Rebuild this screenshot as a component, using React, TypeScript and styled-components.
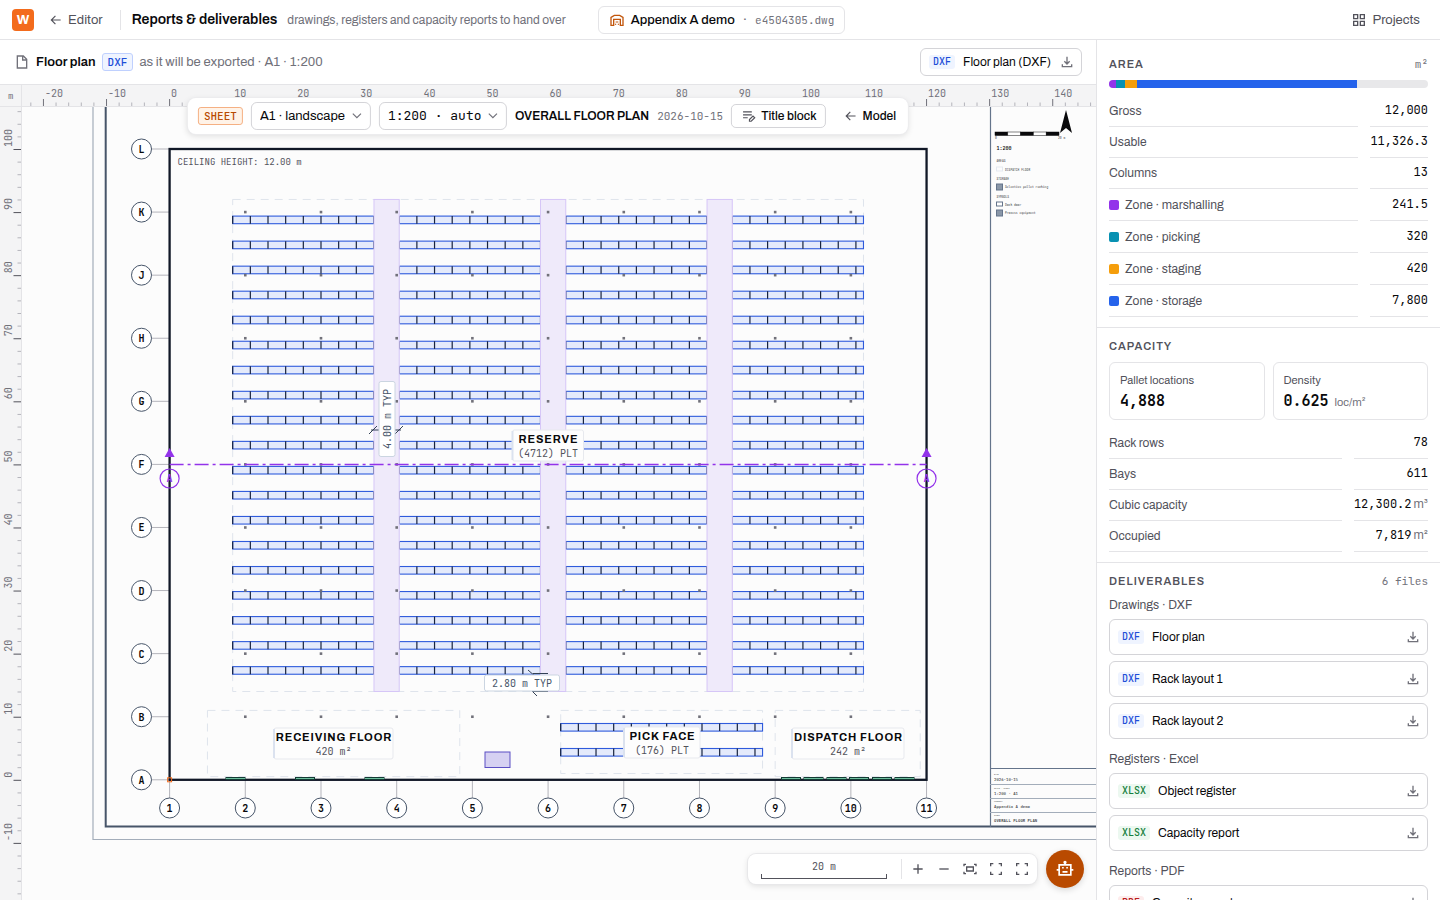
import React from "react";
import styled, { createGlobalStyle } from "styled-components";

const SANS = '"Archivo", "Liberation Sans", Arial, sans-serif';
const MONO = '"JetBrains Mono", "Liberation Mono", monospace';

const GlobalStyle = createGlobalStyle`
  *, *::before, *::after { box-sizing: border-box; }
  html, body, #root { height: 100%; margin: 0; }
  body { font-family: ${SANS}; font-size: 13px; line-height: 20px; color: #09090b; background: #fff; }
  button, select { font: inherit; color: inherit; }
  button { cursor: pointer; }
  h1, h2, h3, ul { margin: 0; padding: 0; }
`;

const BORDER = "#e4e4e7";

/* ---------- icons ---------- */

type IconProps = { size?: number; color?: string; children?: React.ReactNode };

const Stroke = ({ size = 16, color = "#52525b", children }: IconProps) => (
  <svg width={size} height={size} viewBox="0 0 24 24" fill="none" stroke={color} strokeWidth={2} aria-hidden="true">
    {children}
  </svg>
);

const ArrowLeftIcon = () => (
  <Stroke size={14}><path d="M20 12H5M11 5l-7 7 7 7" /></Stroke>
);
const FileIcon = () => (
  <Stroke color="#71717a"><path d="M14 3H5v18h14V8zM13 3v6h6" /></Stroke>
);
const DownloadIcon = () => (
  <Stroke color="#71717a"><path d="M12 4v11M8 11l4 4 4-4M5 15.500V19h14v-3.500" /></Stroke>
);
const WarehouseIcon = () => (
  <Stroke color="#c2560c">
    <path d="M3 20V8l5-3h8l5 3v12h-4v-9H7v9z" />
    <path d="M10 15h4M10 19.500v-2M14 19.500v-2" strokeWidth={1.5} />
  </Stroke>
);
const GridIcon = () => (
  <Stroke><path d="M4 4h6v6H4zM14 4h6v6h-6zM4 14h6v6H4zM14 14h6v6h-6z" /></Stroke>
);
const EditNoteIcon = () => (
  <Stroke size={14}><path d="M2 5h15M2 10h15M2 15h8M13 21v-3l6-6 3 3-6 6z" /></Stroke>
);
const ChevronIcon = () => (
  <Stroke size={14} color="#71717a"><path d="M5 8l7 7 7-7" /></Stroke>
);
const PlusIcon = () => <Stroke><path d="M12 5v14M5 12h14" /></Stroke>;
const MinusIcon = () => <Stroke><path d="M5 12h14" /></Stroke>;
const FitIcon = () => (
  <Stroke><path d="M3 8V5h3M18 5h3v3M21 16v3h-3M6 19H3v-3M7 9h10v6H7z" /></Stroke>
);
const FrameIcon = () => (
  <Stroke><path d="M4 8V4h4M16 4h4v4M20 16v4h-4M8 20H4v-4" /></Stroke>
);
const RobotIcon = () => (
  <Stroke size={20} color="#fff">
    <path d="M5 7h14v12H5zM12 7V4M2 13h3M19 13h3M9 15.500h6" />
    <circle cx="12" cy="4" r="1" />
    <path d="M8.500 10.500h2M13.500 10.500h2" />
  </Stroke>
);

/* ---------- shell ---------- */

const Page = styled.div`
  display: flex;
  flex-direction: column;
  height: 100vh;
  overflow: hidden;
`;

const TopBar = styled.header`
  display: flex;
  align-items: center;
  flex: none;
  height: 40px;
  padding: 0 12px;
  border-bottom: 1px solid ${BORDER};
`;

const Logo = styled.span`
  display: grid;
  place-items: center;
  width: 22px;
  height: 22px;
  border-radius: 4px;
  background: #f36b1c;
  color: #fff;
  font-size: 13px;
  font-weight: 700;
`;

const NavLink = styled.a<{ $push?: boolean }>`
  display: flex;
  align-items: center;
  gap: 5px;
  padding: 0 8px;
  margin-left: ${(p) => (p.$push ? "auto" : "7px")};
  color: #52525b;
  font-size: 13px;
  text-decoration: none;
`;

const Divider = styled.span`
  width: 1px;
  height: 20px;
  margin: 0 11px 0 9px;
  background: ${BORDER};
`;

const PageTitle = styled.h1`
  margin-right: 10px;
  font-size: 14px;
  font-weight: 600;
  white-space: nowrap;
`;

const Muted = styled.span<{ $small?: boolean }>`
  color: #71717a;
  font-size: ${(p) => (p.$small ? 12 : 13)}px;
  white-space: nowrap;
`;

const ProjectChip = styled.button`
  display: flex;
  align-items: center;
  gap: 6px;
  height: 28px;
  margin-left: 32px;
  padding: 0 10px;
  border: 1px solid ${BORDER};
  border-radius: 6px;
  background: #fff;
  font-size: 13px;
  font-weight: 500;
  white-space: nowrap;
`;

const Dot = styled.span`
  margin: 0 2px;
  color: #71717a;
`;

const Mono = styled.span`
  color: #71717a;
  font-family: ${MONO};
  font-size: 11px;
  font-weight: 400;
`;

const Body = styled.div`
  display: flex;
  flex: 1;
  min-height: 0;
`;

const Workspace = styled.main`
  display: flex;
  flex-direction: column;
  flex: 1;
  min-width: 0;
`;

const SubBar = styled.div`
  display: flex;
  align-items: center;
  flex: none;
  gap: 6px;
  height: 45px;
  padding: 0 14px;
  border-bottom: 1px solid ${BORDER};
`;

const SubTitle = styled.h2`
  font-size: 13px;
  font-weight: 600;
`;

const tones = {
  blue: ["#1d4ed8", "#eff4ff", "#bfd0fe"],
  green: ["#15803d", "#ecf8f0", "#bbf7d0"],
  orange: ["#b84a00", "#fff3e8", "#f5b083"],
  red: ["#b91c1c", "#fdecec", "#fecaca"],
};

const Badge = styled.span<{ $tone: keyof typeof tones; $outlined?: boolean }>`
  padding: 0 ${(p) => (p.$outlined ? 5 : 4)}px;
  border: ${(p) => (p.$outlined ? `1px solid ${tones[p.$tone][2]}` : "0")};
  border-radius: 3px;
  background: ${(p) => tones[p.$tone][1]};
  color: ${(p) => tones[p.$tone][0]};
  font-family: ${MONO};
  font-size: ${(p) => (p.$outlined ? 11 : 10)}px;
  font-weight: 500;
  line-height: ${(p) => (p.$outlined ? 16 : 14)}px;
`;

const ExportButton = styled.button`
  display: flex;
  align-items: center;
  gap: 8px;
  height: 28px;
  margin-left: auto;
  padding: 0 6px 0 8px;
  border: 1px solid #d4d4d8;
  border-radius: 6px;
  background: #fff;
  font-size: 12px;
`;

/* ---------- canvas ---------- */

const Canvas = styled.section`
  position: relative;
  flex: 1;
  min-height: 0;
  overflow: hidden;
  background: #fcfcfc;
`;

const Drawing = styled.svg`
  display: block;
  width: 100%;
  height: 100%;
  font-family: ${MONO};
`;

const SheetBar = styled.div`
  position: absolute;
  top: 13px;
  left: 50%;
  display: flex;
  align-items: center;
  gap: 8px;
  height: 36px;
  padding: 0 10px;
  border-radius: 8px;
  background: #fff;
  box-shadow: 0 0 0 1px #ececee, 0 2px 6px rgba(0, 0, 0, 0.12);
  transform: translateX(-50%);
  white-space: nowrap;
`;

const SelectWrap = styled.span<{ $mono?: boolean }>`
  display: grid;
  align-items: center;
  height: 28px;
  border: 1px solid #d4d4d8;
  border-radius: 6px;
  font-family: ${(p) => (p.$mono ? MONO : SANS)};
  font-size: 13px;
  select, svg { grid-area: 1 / 1; }
  svg { justify-self: end; margin-right: 6px; pointer-events: none; }
`;

const Select = styled.select<{ $width: number }>`
  width: ${(p) => p.$width}px;
  height: 26px;
  padding: 0 8px;
  border: 0;
  background: none;
  appearance: none;
`;

const SheetName = styled.strong`
  font-size: 12px;
  font-weight: 600;
`;

const BarButton = styled.button<{ $plain?: boolean }>`
  display: flex;
  align-items: center;
  gap: 5px;
  height: 24px;
  padding: 0 ${(p) => (p.$plain ? 2 : 8)}px 0 10px;
  border: ${(p) => (p.$plain ? "0" : "1px solid #d4d4d8")};
  border-radius: 5px;
  background: #fff;
  font-size: 12px;
  font-weight: 500;
`;

const Dock = styled.div`
  position: absolute;
  right: 12px;
  bottom: 12px;
  display: flex;
  align-items: center;
  gap: 9px;
`;

const ZoomBar = styled.div`
  display: flex;
  align-items: center;
  height: 30px;
  padding: 0 2px 0 13px;
  border-radius: 8px;
  background: #fff;
  box-shadow: 0 0 0 1px #e8e8ea, 0 2px 6px rgba(0, 0, 0, 0.12);
`;

const ScaleBar = styled.div`
  display: flex;
  flex-direction: column;
  width: 126px;
  margin-right: 14px;
  color: #52525b;
  font-family: ${MONO};
  font-size: 10px;
  line-height: 14px;
  text-align: center;
  &::after {
    content: "";
    height: 5px;
    border: 1px solid #52525b;
    border-top: 0;
  }
`;

const ToolDivider = styled.span`
  width: 1px;
  height: 20px;
  margin-right: 3px;
  background: ${BORDER};
`;

const ToolButton = styled.button`
  display: grid;
  place-items: center;
  width: 26px;
  height: 26px;
  padding: 0;
  border: 0;
  background: none;
`;

const AssistantButton = styled.button`
  display: grid;
  place-items: center;
  width: 38px;
  height: 38px;
  padding: 0;
  border: 0;
  border-radius: 50%;
  background: #b94a00;
  box-shadow: 0 2px 6px rgba(0, 0, 0, 0.15);
`;

/* metres to canvas units */
const S = 6.308;
const X = (m: number) => 169.6 + m * S;
const Y = (m: number) => 694.8 - m * S;

const range = (n: number, from = 0) => Array.from({ length: n }, (_, i) => i + from);

const Rulers = () => (
  <g fontSize={10} fill="#71717a" stroke="none">
    <rect x={0} y={0} width="100%" height={22} fill="#f4f4f5" />
    <rect x={0} y={0} width={22} height="100%" fill="#f4f4f5" />
    {range(86, -11).map((i) => {
      const major = i % 5 === 0;
      return <path key={i} d={`M${X(i * 2)} ${major ? 14 : 17.5}V22`} stroke={major ? "#71717a" : "#b4b4bb"} />;
    })}
    {range(17, -2).map((i) => (
      <text key={i} x={X(i * 10) + 1.5} y={12}>{i * 10}</text>
    ))}
    {range(65, -9).map((i) => {
      const major = i % 5 === 0;
      return <path key={i} d={`M${major ? 13.5 : 17.5} ${Y(i * 2) + 0.5}H22`} stroke={major ? "#52525b" : "#b4b4bb"} />;
    })}
    {range(12, -1).map((i) => (
      <text key={i} transform={`translate(12 ${Y(i * 10) - 2}) rotate(-90)`}>{i * 10}</text>
    ))}
    <rect x={0} y={0} width={22} height={22} fill="#f4f4f5" />
    <text x={8} y={14} fontSize={9}>m</text>
    <path d="M21.500 0V815M0 21.500H1096" stroke={BORDER} />
  </g>
);

const Rack = ({ x, y, width, bays }: { x: number; y: number; width: number; bays: number }) => (
  <g>
    <rect x={x} y={y} width={width} height={7.6} fill="#e4eafb" stroke="#2f5bdc" strokeWidth={1.1} />
    {range(bays + 1).map((i) => (
      <path key={i} d={`M${x + i * 2.8 * S} ${y}v7.600`} stroke="#17233f" strokeWidth={1.2} />
    ))}
  </g>
);

const Zone = ({ x1, y1, x2, y2 }: { x1: number; y1: number; x2: number; y2: number }) => (
  <rect x={X(x1)} y={Y(y2)} width={(x2 - x1) * S} height={(y2 - y1) * S} fill="none" stroke="#dfe4ec" strokeDasharray="8 6" />
);

const Bubble = ({ x, y, label }: { x: number; y: number; label: string }) => (
  <g>
    <circle cx={x} cy={y} r={10} fill="#fff" stroke="#475569" strokeWidth={1} />
    <text x={x} y={y + 4} fontSize={10} fontWeight={700} textAnchor="middle" fill="#09090b">{label}</text>
  </g>
);

type TagProps = { x: number; y: number; width: number; title: string; note: string };
const Tag = ({ x, y, width, title, note }: TagProps) => (
  <g textAnchor="middle">
    <rect x={x - width / 2} y={y} width={width} height={31} rx={2} fill="#fdfdfd" stroke="#e7e9ee" />
    <path d={`M${x - width / 2} ${y + 1}v29`} stroke="#dbe2ef" strokeWidth={2} />
    <text x={x + 0.5} y={y + 13} fontFamily={SANS} fontSize={11} fontWeight={700} letterSpacing="0.08em" fill="#09090b">{title}</text>
    <text x={x} y={y + 27} fontSize={10} fill="#52525b">{note}</text>
  </g>
);

const DimTag = ({ width, children }: { width: number; children: string }) => (
  <g>
    <rect x={-width / 2} y={-8} width={width} height={16} rx={2} fill="#fff" stroke="#cbd5e1" />
    <text y={4} fontSize={10} textAnchor="middle" fill="#475569">{children}</text>
  </g>
);

const rowLabels = ["A", "B", "C", "D", "E", "F", "G", "H", "J", "K", "L"];
const blocks = [
  { x: 10, w: 22.4, bays: 8 },
  { x: 36.4, w: 22.4, bays: 8 },
  { x: 62.8, w: 22.4, bays: 8 },
  { x: 89.2, w: 20.8, bays: 7 },
];
const doors = [226, 295.5, 365, 781.5, 804, 827, 849.5, 872.5, 895];

const legend: [string, number][] = [["AREAS", 77], ["STORAGE", 95], ["SYMBOLS", 113]];
const legendItems: [string, number, string, string][] = [
  ["DISPATCH FLOOR", 85, "#fcfcfd", "#e5e9f0"],
  ["Selective pallet racking", 102, "#8a97a8", "#64748b"],
  ["Dock door", 120, "#ffffff", "#64748b"],
  ["Process equipment", 128, "#8a97a8", "#64748b"],
];
const titleRows: [string, string, number][] = [
  ["DATE", "2026-10-15", 684],
  ["SCALE · SHEET", "1:200 · A1", 698],
  ["PROJECT", "Appendix A demo", 711],
  ["SHEET", "OVERALL FLOOR PLAN", 725],
];

const TitleBlock = () => (
  <g fill="#3f3f46">
    <path d="M990.500 22V742" stroke="#64748b" strokeWidth={1.2} fill="none" />
    <g stroke="#09090b" strokeWidth={0.5}>
      {range(5).map((i) => (
        <rect key={i} x={995 + i * 12.8} y={47} width={12.8} height={3.5} fill={i % 2 ? "#fff" : "#09090b"} />
      ))}
    </g>
    <path d="M1066 25l6 23-6-5-6 5z" fill="#09090b" />
    <text x={995} y={54} fontSize={3}>0</text>
    <text x={1058} y={54} fontSize={3}>20 m</text>
    <text x={996.5} y={65} fontSize={5} fontWeight={700} fill="#09090b">1:200</text>
    {legend.map(([t, y]) => <text key={t} x={996.5} y={y} fontSize={3}>{t}</text>)}
    {legendItems.map(([t, y, fill, stroke]) => (
      <g key={t}>
        <rect x={996.5} y={y - 3} width={6} height={y === 102 || y === 128 ? 6 : 4} fill={fill} stroke={stroke} />
        <text x={1005} y={y + 1} fontSize={3}>{t}</text>
      </g>
    ))}
    <path d="M990 683.500H1096" stroke="#64748b" />
    <path d="M990 699.500H1096M990 713.500H1096M990 727.500H1096" stroke="#a3adba" />
    {titleRows.map(([k, v, y]) => (
      <g key={k}>
        <text x={994} y={y + 6} fontSize={2}>{k}</text>
        <text x={994} y={y + 12} fontSize={4} fontWeight={y > 720 ? 700 : 500}>{v}</text>
      </g>
    ))}
  </g>
);

const FloorPlan = () => (
  <Drawing role="img" aria-label="Overall floor plan, sheet A1 at 1:200">
    <g fill="none">
      <path d="M93 22V754.500H1096" stroke="#a3adba" strokeWidth={1.2} />
      <path d="M105.700 22V741.500H1096" stroke="#475569" strokeWidth={2} />
      <TitleBlock />

      <Zone x1={10} y1={14} x2={110} y2={92} />
      <Zone x1={6} y1={0.5} x2={46} y2={11} />
      <Zone x1={62} y1={1} x2={94} y2={11} />
      <Zone x1={96} y1={0.5} x2={119} y2={11} />

      {range(19).map((r) =>
        blocks.map((b) => <Rack key={`${r}-${b.x}`} x={X(b.x)} y={131.1 + r * 25.03} width={b.w * S} bays={b.bays} />),
      )}
      <Rack x={X(62)} y={638.5} width={32 * S} bays={11} />
      <Rack x={X(62)} y={663.5} width={32 * S} bays={11} />

      {[32.4, 58.8, 85.2].map((x) => (
        <rect key={x} x={X(x)} y={Y(92)} width={4 * S} height={78 * S} fill="#efeafa" stroke="#d6c6f7" />
      ))}
      {range(9, 1).map((c) =>
        range(9, 1).map((r) => (
          <rect key={`${c}-${r}`} x={X(c * 12) - 1.3} y={Y(r * 10) - 1.3} width={2.6} height={2.6} fill="#71717a" />
        )),
      )}
      <rect x={485} y={667} width={25} height={15.5} fill="#d6d1f2" stroke="#5b4fc4" />

      {rowLabels.map((l, i) => (
        <g key={l}>
          <path d={`M151 ${Y(i * 10)}H${X(0)}`} stroke="#b4b4bb" />
          <Bubble x={141.5} y={Y(i * 10)} label={l} />
        </g>
      ))}
      {range(11).map((i) => (
        <g key={i}>
          <path d={`M${X(i * 12)} ${Y(0)}V713`} stroke="#b4b4bb" />
          <Bubble x={X(i * 12)} y={723} label={`${i + 1}`} />
        </g>
      ))}
      <rect x={X(0)} y={Y(100)} width={120 * S} height={100 * S} stroke="#111827" strokeWidth={2.3} />
      {doors.map((x) => (
        <rect key={x} x={x} y={692.5} width={19} height={2} fill="#6fbf9f" stroke="#123b33" />
      ))}
      <rect x={X(0) - 2} y={Y(0) - 2} width={4} height={4} stroke="#f36b1c" />
      <text x={177.5} y={80} fontSize={9} fill="#52525b">CEILING HEIGHT: 12.00 m</text>

      <path d={`M${X(0)} ${Y(50)}H${X(120)}`} stroke="#9333ea" strokeWidth={1.5} strokeDasharray="14 4 3 4" />
      {[0, 120].map((m) => (
        <g key={m}>
          <path d={`M${X(m)} 363l5 9h-10z`} fill="#9333ea" />
          <circle cx={X(m)} cy={393.5} r={9.5} stroke="#9333ea" strokeWidth={1.2} />
          <text x={X(m)} y={397} fontSize={10} fontWeight={700} textAnchor="middle" fill="#9333ea">A</text>
        </g>
      ))}

      <path d="M369 349l8-8M395 349l8-8M371 345h30M528 585l8 7M530 604l7 7M533 588.500h15M533 606.500h15" stroke="#334155" />
      <g transform="translate(387 334) rotate(-90)"><DimTag width={75}>4.00 m TYP</DimTag></g>
      <g transform="translate(522 598)"><DimTag width={75}>2.80 m TYP</DimTag></g>

      <Tag x={548} y={345} width={71} title="RESERVE" note="(4712) PLT" />
      <Tag x={333.5} y={643} width={119} title="RECEIVING FLOOR" note="420 m²" />
      <Tag x={662} y={642} width={76} title="PICK FACE" note="(176) PLT" />
      <Tag x={848} y={643} width={112} title="DISPATCH FLOOR" note="242 m²" />
      <Rulers />
    </g>
  </Drawing>
);

/* ---------- side panel ---------- */

const Panel = styled.aside`
  flex: none;
  width: 344px;
  padding-top: 6px;
  overflow-y: auto;
  border-left: 1px solid ${BORDER};
  scrollbar-width: none;
`;

const Section = styled.section`
  padding: 8px 12px 10px;
  & + & { border-top: 1px solid ${BORDER}; }
`;

const SectionHead = styled.div`
  display: flex;
  align-items: center;
  justify-content: space-between;
  height: 20px;
`;

const SectionTitle = styled.h3`
  color: #52525b;
  font-size: 11px;
  font-weight: 600;
  letter-spacing: 1px;
`;

const HeadNote = styled.span`
  color: #71717a;
  font-family: ${MONO};
  font-size: 11px;
`;

const AreaBar = styled.div`
  display: flex;
  height: 8px;
  margin: 6px 0 8px;
  overflow: hidden;
  border-radius: 4px;
  background: #e8e8ea;
`;

const AreaPart = styled.span<{ $color: string }>`
  background: ${(p) => p.$color};
`;

const DataTable = styled.table<{ $valueWidth: number }>`
  width: 100%;
  border-collapse: separate;
  border-spacing: 0;
  table-layout: fixed;
  th, td { padding: 0; }
  th {
    color: #52525b;
    font-size: 12px;
    font-weight: 400;
    text-align: left;
  }
  td {
    width: ${(p) => p.$valueWidth + 12}px;
    padding-left: 12px;
    font-family: ${MONO};
    font-size: 12px;
    text-align: right;
  }
`;

const Cell = styled.span<{ $tall?: boolean; $end?: boolean }>`
  display: flex;
  align-items: center;
  justify-content: ${(p) => (p.$end ? "flex-end" : "flex-start")};
  gap: ${(p) => (p.$end ? 2 : 6)}px;
  height: ${(p) => (p.$tall ? 32 : 31)}px;
  padding-bottom: ${(p) => (p.$end ? 2 : 0)}px;
  border-bottom: 1px solid ${BORDER};
`;

const Unit = styled.span`
  color: #71717a;
  font-family: ${SANS};
  font-size: 12px;
`;

const Swatch = styled.span<{ $color: string }>`
  width: 10px;
  height: 10px;
  border-radius: 2px;
  background: ${(p) => p.$color};
`;

const Stats = styled.div`
  display: grid;
  grid-template-columns: 1fr 1fr;
  gap: 8px;
  margin: 6px 0 8px;
`;

const Stat = styled.div`
  height: 58px;
  padding: 7px 10px;
  border: 1px solid ${BORDER};
  border-radius: 6px;
`;

const StatLabel = styled.div`
  color: #52525b;
  font-size: 11px;
`;

const StatValue = styled.div`
  font-family: ${MONO};
  font-size: 15px;
  font-weight: 600;
  line-height: 22px;
  small {
    margin-left: 6px;
    color: #71717a;
    font-family: ${SANS};
    font-size: 11px;
    font-weight: 400;
  }
`;

const Groups = styled.div`
  padding-top: 4px;
`;

const GroupLabel = styled.div`
  height: 20px;
  margin-bottom: 4px;
  color: #52525b;
  font-size: 12px;
  line-height: 20px;
`;

const FileList = styled.ul`
  display: grid;
  gap: 6px;
  && { margin-bottom: 10px; }
  list-style: none;
`;

const FileButton = styled.button`
  display: flex;
  align-items: center;
  gap: 8px;
  width: 100%;
  height: 36px;
  padding: 0 6px 0 8px;
  border: 1px solid #d4d4d8;
  border-radius: 6px;
  background: #fff;
  font-size: 12px;
  text-align: left;
  svg { margin-left: auto; }
`;

type Row = { label: string; value: string; unit?: string; color?: string; area?: number };

const areaRows: Row[] = [
  { label: "Gross", value: "12,000" },
  { label: "Usable", value: "11,326.3" },
  { label: "Columns", value: "13" },
  { label: "Zone · marshalling", value: "241.5", color: "#9333ea", area: 2.1 },
  { label: "Zone · picking", value: "320", color: "#0891b2", area: 2.9 },
  { label: "Zone · staging", value: "420", color: "#f59e0b", area: 3.7 },
  { label: "Zone · storage", value: "7,800", color: "#2563eb", area: 69 },
];

const capacityRows: Row[] = [
  { label: "Rack rows", value: "78" },
  { label: "Bays", value: "611" },
  { label: "Cubic capacity", value: "12,300.2", unit: "m³" },
  { label: "Occupied", value: "7,819", unit: "m²" },
];

const DataRows = ({ rows, valueWidth }: { rows: Row[]; valueWidth: number }) => (
  <DataTable $valueWidth={valueWidth}>
    <tbody>
      {rows.map((r) => (
        <tr key={r.label}>
          <th scope="row">
            <Cell $tall={!!r.color}>{r.color && <Swatch $color={r.color} />}{r.label}</Cell>
          </th>
          <td>
            <Cell $end $tall={!!r.color}>{r.value}{r.unit && <Unit>{r.unit}</Unit>}</Cell>
          </td>
        </tr>
      ))}
    </tbody>
  </DataTable>
);

type Group = { label: string; kind: string; tone: keyof typeof tones; files: string[] };
const groups: Group[] = [
  { label: "Drawings · DXF", kind: "DXF", tone: "blue", files: ["Floor plan", "Rack layout 1", "Rack layout 2"] },
  { label: "Registers · Excel", kind: "XLSX", tone: "green", files: ["Object register", "Capacity report"] },
  { label: "Reports · PDF", kind: "PDF", tone: "red", files: ["Capacity report"] },
];

export default function App() {
  return (
    <Page>
      <GlobalStyle />
      <TopBar>
        <Logo>W</Logo>
        <NavLink href="#editor"><ArrowLeftIcon />Editor</NavLink>
        <Divider />
        <PageTitle>Reports &amp; deliverables</PageTitle>
        <Muted $small>drawings, registers and capacity reports to hand over</Muted>
        <ProjectChip><WarehouseIcon />Appendix A demo<Dot>·</Dot><Mono>e4504305.dwg</Mono></ProjectChip>
        <NavLink href="#projects" $push><GridIcon />Projects</NavLink>
      </TopBar>
      <Body>
        <Workspace>
          <SubBar>
            <FileIcon />
            <SubTitle>Floor plan</SubTitle>
            <Badge $tone="blue" $outlined>DXF</Badge>
            <Muted>as it will be exported · A1 · 1:200</Muted>
            <ExportButton><Badge $tone="blue">DXF</Badge>Floor plan (DXF)<DownloadIcon /></ExportButton>
          </SubBar>
          <Canvas>
            <FloorPlan />
            <SheetBar>
              <Badge $tone="orange" $outlined>SHEET</Badge>
              <SelectWrap>
                <Select $width={118} aria-label="Paper size"><option>A1 · landscape</option></Select>
                <ChevronIcon />
              </SelectWrap>
              <SelectWrap $mono>
                <Select $width={126} aria-label="Scale"><option>1:200 · auto</option></Select>
                <ChevronIcon />
              </SelectWrap>
              <SheetName>OVERALL FLOOR PLAN</SheetName>
              <Mono>2026-10-15</Mono>
              <BarButton><EditNoteIcon />Title block</BarButton>
              <BarButton $plain><ArrowLeftIcon />Model</BarButton>
            </SheetBar>
            <Dock>
              <ZoomBar>
                <ScaleBar>20 m</ScaleBar>
                <ToolDivider />
                <ToolButton aria-label="Zoom in"><PlusIcon /></ToolButton>
                <ToolButton aria-label="Zoom out"><MinusIcon /></ToolButton>
                <ToolButton aria-label="Fit sheet"><FitIcon /></ToolButton>
                <ToolButton aria-label="Fit selection"><FrameIcon /></ToolButton>
                <ToolButton aria-label="Full screen"><FrameIcon /></ToolButton>
              </ZoomBar>
              <AssistantButton aria-label="Assistant"><RobotIcon /></AssistantButton>
            </Dock>
          </Canvas>
        </Workspace>
        <Panel>
          <Section>
            <SectionHead><SectionTitle>AREA</SectionTitle><HeadNote>m²</HeadNote></SectionHead>
            <AreaBar>
              {areaRows.filter((r) => r.area).map((r) => (
                <AreaPart key={r.label} $color={r.color!} style={{ width: `${r.area}%` }} />
              ))}
            </AreaBar>
            <DataRows rows={areaRows} valueWidth={58} />
          </Section>
          <Section>
            <SectionHead><SectionTitle>CAPACITY</SectionTitle></SectionHead>
            <Stats>
              <Stat><StatLabel>Pallet locations</StatLabel><StatValue>4,888</StatValue></Stat>
              <Stat><StatLabel>Density</StatLabel><StatValue>0.625<small>loc/m²</small></StatValue></Stat>
            </Stats>
            <DataRows rows={capacityRows} valueWidth={74} />
          </Section>
          <Section>
            <SectionHead><SectionTitle>DELIVERABLES</SectionTitle><HeadNote>6 files</HeadNote></SectionHead>
            <Groups>
              {groups.map((g) => (
                <React.Fragment key={g.label}>
                  <GroupLabel>{g.label}</GroupLabel>
                  <FileList>
                    {g.files.map((f) => (
                      <li key={f}><FileButton><Badge $tone={g.tone}>{g.kind}</Badge>{f}<DownloadIcon /></FileButton></li>
                    ))}
                  </FileList>
                </React.Fragment>
              ))}
            </Groups>
          </Section>
        </Panel>
      </Body>
    </Page>
  );
}
